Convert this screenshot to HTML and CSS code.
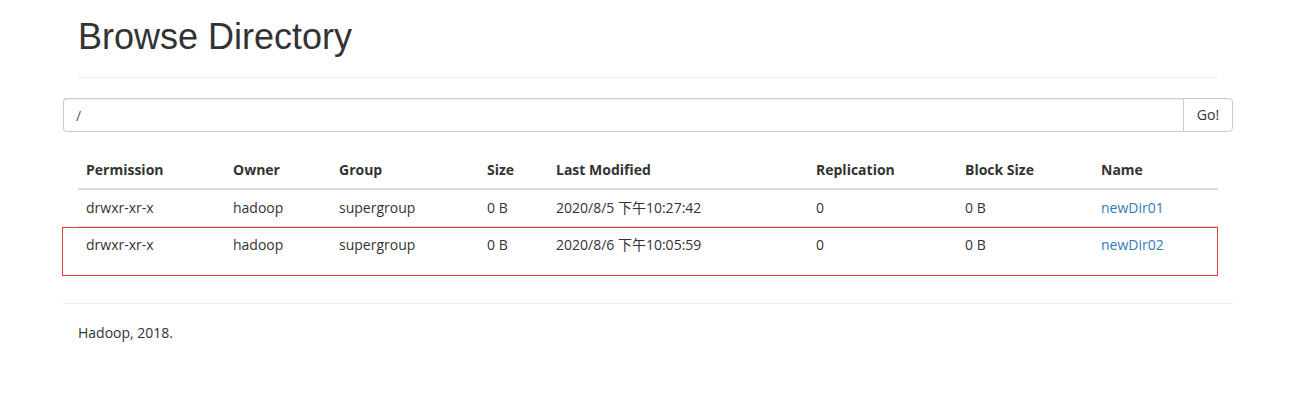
FILE: index.html
```html
<!DOCTYPE html>
<html>
<head>
<meta charset="utf-8">
<title>Browse Directory</title>
<link rel="stylesheet" href="styles.css">
</head>
<body>
<div class="container">
  <div class="page-header">
    <h1>Browse Directory</h1>
  </div>
  <div class="input-group">
    <input class="form-control" type="text" value="/">
    <button class="btn">Go!</button>
  </div>
  <div class="table-wrap">
    <table class="table">
      <thead>
        <tr>
          <th class="c1">Permission</th>
          <th class="c2">Owner</th>
          <th class="c3">Group</th>
          <th class="c4">Size</th>
          <th class="c5">Last Modified</th>
          <th class="c6">Replication</th>
          <th class="c7">Block Size</th>
          <th class="c8">Name</th>
        </tr>
      </thead>
      <tbody>
        <tr>
          <td>drwxr-xr-x</td>
          <td>hadoop</td>
          <td>supergroup</td>
          <td>0 B</td>
          <td>2020/8/5 下午10:27:42</td>
          <td>0</td>
          <td>0 B</td>
          <td><a href="#">newDir01</a></td>
        </tr>
        <tr>
          <td>drwxr-xr-x</td>
          <td>hadoop</td>
          <td>supergroup</td>
          <td>0 B</td>
          <td>2020/8/6 下午10:05:59</td>
          <td>0</td>
          <td>0 B</td>
          <td><a href="#">newDir02</a></td>
        </tr>
      </tbody>
    </table>
    <div class="highlight"></div>
  </div>
  <hr class="sep">
  <div class="footer">
    <p>Hadoop, 2018.</p>
  </div>
</div>
</body>
</html>
```
FILE: styles.css
```css
html, body {
  margin: 0;
  padding: 0;
  background: #fff;
}
body {
  font-family: "Open Sans", "Noto Sans CJK SC", sans-serif;
  font-size: 14px;
  line-height: 20px;
  color: #333;
}
.container {
  width: 1170px;
  margin-left: 63px;
}
.page-header {
  margin: 0 15px;
  padding-bottom: 20px;
  border-bottom: 1px solid #eee;
}
.page-header h1 {
  margin: 0;
  padding-top: 17px;
  font-family: "Liberation Sans", Arial, sans-serif;
  font-weight: normal;
  font-size: 36px;
  line-height: 40px;
  color: #333;
}
.input-group {
  display: flex;
  margin-top: 20px;
  height: 34px;
}
.form-control {
  flex: 1;
  box-sizing: border-box;
  height: 34px;
  margin: 0;
  padding: 6px 12px;
  border: 1px solid #ccc;
  border-right: 0;
  border-radius: 4px 0 0 4px;
  font-family: "Open Sans", "Noto Sans CJK SC", sans-serif;
  font-size: 14px;
  color: #555;
  box-shadow: inset 0 1px 1px rgba(0,0,0,.075);
  outline: none;
}
.btn {
  box-sizing: border-box;
  width: 50px;
  height: 34px;
  margin: 0;
  padding: 5px 0 7px;
  border: 1px solid #ccc;
  border-radius: 0 4px 4px 0;
  background: #fff;
  font-family: "Open Sans", "Noto Sans CJK SC", sans-serif;
  font-size: 14px;
  color: #333;
}
.table-wrap {
  position: relative;
  margin: 20px 15px 40px;
}
.table {
  width: 1140px;
  border-collapse: collapse;
  table-layout: fixed;
}
.table th, .table td {
  padding: 8px;
  text-align: left;
  vertical-align: top;
  white-space: nowrap;
}
.table th {
  font-weight: bold;
  border-bottom: 2px solid #ddd;
}
.table tbody tr + tr td {
  border-top: 1px solid #ddd;
}
.c1 { width: 131px; }
.c2 { width: 90px; }
.c3 { width: 132px; }
.c4 { width: 53px; }
.c5 { width: 244px; }
.c6 { width: 133px; }
.c7 { width: 120px; }
.c8 { width: 109px; }
.table a {
  color: #337ab7;
  text-decoration: none;
}
.highlight {
  position: absolute;
  left: -16px;
  top: 75px;
  width: 1154px;
  height: 47px;
  border: 1px solid #e03c3c;
  pointer-events: none;
}
.sep {
  margin: 0;
  border: 0;
  border-top: 1px solid #eee;
}
.footer {
  padding: 0 15px;
}
.footer p {
  margin: 19px 0 10px;
}
```
